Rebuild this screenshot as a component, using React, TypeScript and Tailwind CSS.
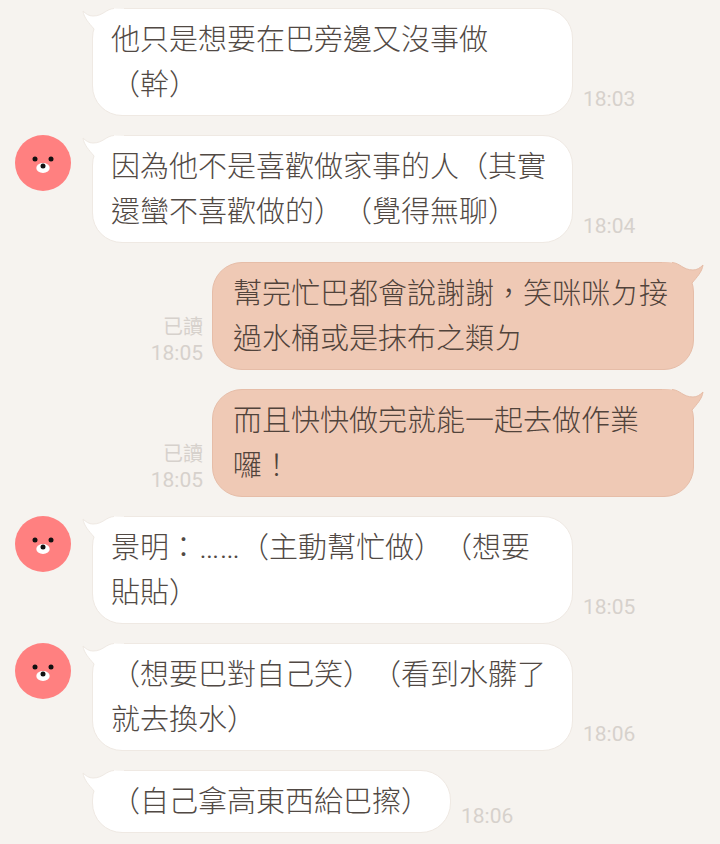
import type { ReactNode } from "react";

const font = { fontFamily: 'Roboto, "Noto Sans CJK TC", sans-serif' };

function Tail({ right }: { right?: boolean }) {
  const fill = right ? "#efc9b5" : "#ffffff";
  const stroke = right ? "#e6bda8" : "#efe9e3";
  return (
    <svg
      className={right ? "absolute right-[-13px] top-[-1px] -scale-x-100" : "absolute left-[-13px] top-[-1px]"}
      width="44"
      height="26"
      viewBox="0 0 44 26"
    >
      <path d="M34 0.5 C26 1 23 8 13 8 C9 8 6 6 3 3 C4 10 9 15 14 21 L44 26 L44 0.5 Z" fill={fill} />
      <path d="M34 0.5 C26 1 23 8 13 8 C9 8 6 6 3 3 C4 10 9 15 14 21" fill="none" stroke={stroke} strokeWidth="1" />
    </svg>
  );
}

function Avatar() {
  return (
    <svg width="56" height="56" viewBox="0 0 56 56" className="shrink-0">
      <circle cx="28" cy="28" r="28" fill="#ff8080" />
      <circle cx="20" cy="24" r="2.5" fill="#111" />
      <circle cx="36" cy="24" r="2.5" fill="#111" />
      <ellipse cx="28" cy="33" rx="6.7" ry="5" fill="#fff" />
      <circle cx="28" cy="31" r="2.5" fill="#111" />
    </svg>
  );
}

function Left({ text, time, avatar }: { text: ReactNode; time: string; avatar?: boolean }) {
  return (
    <div className="flex items-end pl-[15px]">
      <div className="w-[77px] shrink-0 self-start">{avatar && <Avatar />}</div>
      <div className="relative max-w-[481px] rounded-[30px] border border-[#efe9e3] bg-white pb-[7px] pl-[18px] pr-[20px] pt-[9px] text-[29px] font-light leading-[45px] text-[#514944] [text-spacing-trim:space-all]">
        <Tail />
        <span className="relative">{text}</span>
      </div>
      <div className="mb-[5px] ml-[10px] text-[21px] leading-[24px] text-[#d6d1cc]">{time}</div>
    </div>
  );
}

function Right({ text, time }: { text: ReactNode; time: string }) {
  return (
    <div className="flex items-end justify-end pr-[26px]">
      <div className="mb-[4px] mr-[9px] flex flex-col items-end text-[21px] leading-[26px] text-[#d6d1cc]">
        <span className="text-[20px]">已讀</span>
        <span>{time}</span>
      </div>
      <div className="relative max-w-[482px] rounded-[30px] border border-[#e6bda8] bg-[#efc9b5] pb-[7px] pl-[20px] pr-[20px] pt-[9px] text-[29px] font-light leading-[45px] text-[#51433b] [text-spacing-trim:space-all]">
        <Tail right />
        <span className="relative">{text}</span>
      </div>
    </div>
  );
}

export default function App() {
  return (
    <div className="flex h-[844px] w-[720px] flex-col gap-[19px] overflow-hidden bg-[#f6f3ef] pt-[8px]" style={font}>
      <Left text="他只是想要在巴旁邊又沒事做（幹）" time="18:03" />
      <Left avatar text="因為他不是喜歡做家事的人（其實還蠻不喜歡做的）（覺得無聊）" time="18:04" />
      <Right text="幫完忙巴都會說謝謝，笑咪咪ㄉ接過水桶或是抹布之類ㄉ" time="18:05" />
      <Right text="而且快快做完就能一起去做作業囉！" time="18:05" />
      <Left
        avatar
        text={
          <>
            景明：<span className="ml-[1px] text-[32px] leading-none">……</span>（主動幫忙做）（想要貼貼）
          </>
        }
        time="18:05"
      />
      <Left avatar text="（想要巴對自己笑）（看到水髒了就去換水）" time="18:06" />
      <Left text="（自己拿高東西給巴擦）" time="18:06" />
    </div>
  );
}
